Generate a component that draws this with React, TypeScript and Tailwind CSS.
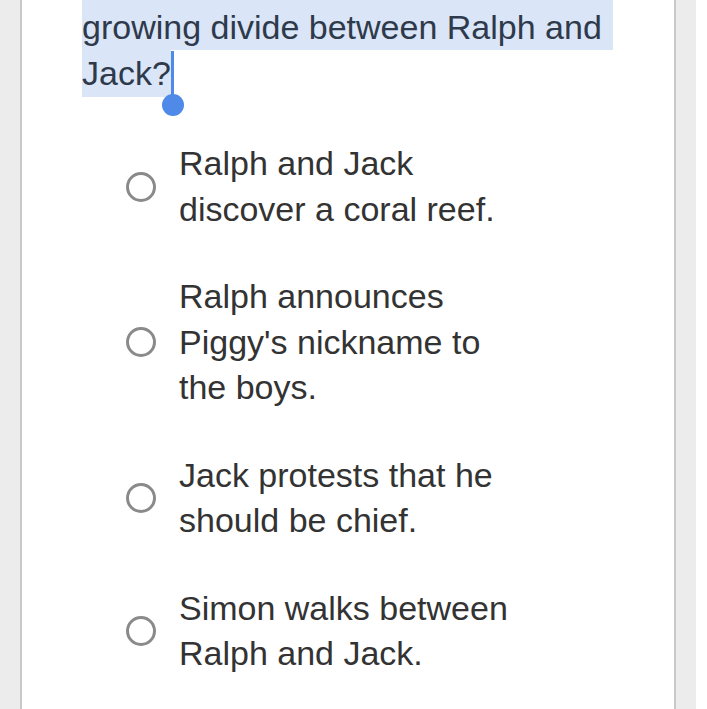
import React from "react";

const options = [
  "Ralph and Jack discover a coral reef.",
  "Ralph announces Piggy's nickname to the boys.",
  "Jack protests that he should be chief.",
  "Simon walks between Ralph and Jack.",
];

export default function App() {
  return (
    <div className="flex h-[709px] w-[707px] overflow-hidden bg-[#ececec] font-['Liberation_Sans',Arial,sans-serif]">
      <div className="w-[20px] shrink-0" />
      <div className="w-[656px] shrink-0 border-x-2 border-[#c9c9c9] bg-white">
        {/* question, partly selected */}
        <div className="pl-[60px] text-[34px] text-[#2e3a4b]">
          <div className="h-[50px] w-[531px] bg-[#dae5f7] pt-[4px] leading-[46px] whitespace-nowrap">
            growing divide between Ralph and
          </div>
          <div className="relative h-[47px] w-[89px] bg-[#dae5f7] leading-[46px] whitespace-nowrap">
            Jack?
            <div className="absolute left-[89px] top-[1px] h-[46px] w-[3px] bg-[#4f8ae8]" />
            <div className="absolute left-[80px] top-[44px] h-[22px] w-[22px] rounded-full bg-[#4f8ae8]" />
          </div>
        </div>

        <div className="mt-[44px] flex flex-col gap-[42px]">
          {options.map((text, i) => (
            <div key={i} className="flex items-center pl-[104px]">
              <div className="h-[30px] w-[30px] shrink-0 rounded-full border-[3px] border-[#8a8a8a]" />
              <div className="ml-[23px] w-[340px] text-[34px] leading-[45.5px] text-[#333333]">
                {text}
              </div>
            </div>
          ))}
        </div>
      </div>
      <div className="w-[20px] shrink-0" />
      <div className="flex-1 bg-white" />
    </div>
  );
}
